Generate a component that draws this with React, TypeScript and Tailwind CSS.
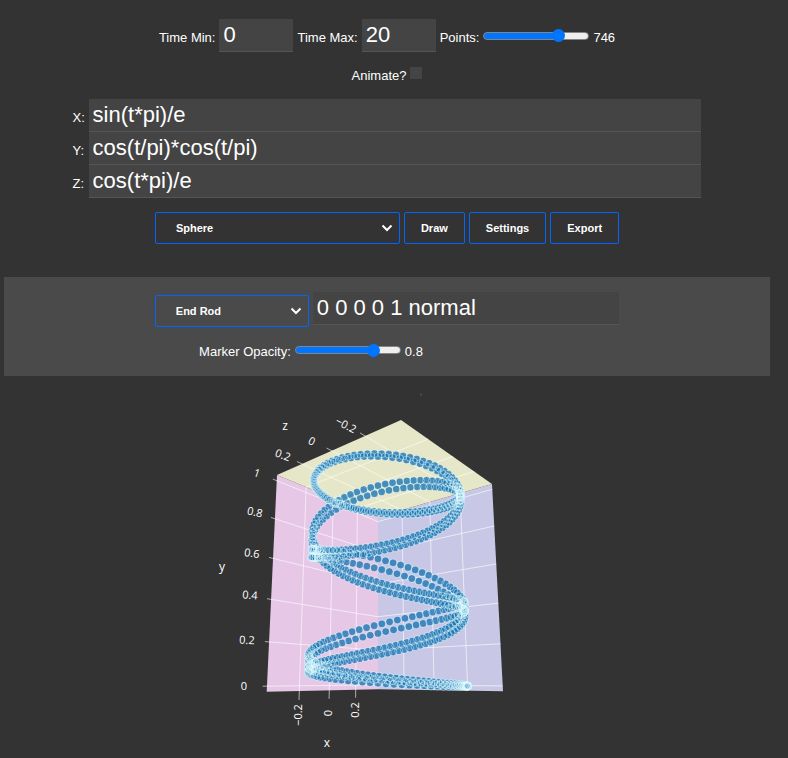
import { useState } from "react";
import type { ReactNode } from "react";

const field =
  "h-[33px] border-b border-[#555555] bg-[#444444] px-1 pb-px text-[22px] text-white outline-none";
const action =
  "h-8 rounded-[2px] border border-[#0066ff] text-[11px] font-bold text-white";
const range =
  "h-2 w-[106px] appearance-none rounded-full border border-[#858585] outline-none [&::-webkit-slider-thumb]:size-[13px] [&::-webkit-slider-thumb]:appearance-none [&::-webkit-slider-thumb]:rounded-full [&::-webkit-slider-thumb]:bg-[#0075ff]";

function Picker({ id, label, width, options }: { id: string; label: string; width: string; options: string[] }) {
  return (
    <div className={"relative h-8 " + width}>
      <select id={id} aria-label={label} className={action + " w-full appearance-none bg-transparent pl-5 pr-8 outline-none"}>
        {options.map((o) => (
          <option key={o} className="bg-[#333333]">{o}</option>
        ))}
      </select>
      <svg className="pointer-events-none absolute right-[7px] top-[11px]" width="12" height="10" viewBox="0 0 12 10" fill="none" stroke="#fff" strokeWidth="2">
        <path d="M1.500 2.500 6 7l4.500-4.500" />
      </svg>
    </div>
  );
}

function Slider({ id, label, min, max, step, initial }: { id: string; label: string; min: number; max: number; step: number; initial: number }) {
  const [value, setValue] = useState(initial);
  const pct = ((value - min) / (max - min)) * 100;
  return (
    <>
      <label htmlFor={id}>{label}</label>
      <input
        id={id}
        type="range"
        min={min}
        max={max}
        step={step}
        value={value}
        onChange={(e) => setValue(Number(e.target.value))}
        className={range}
        style={{ background: `linear-gradient(to right, #0075ff ${pct}%, #efefef ${pct}%)` }}
      />
      <output htmlFor={id}>{value}</output>
    </>
  );
}

// Homogeneous projection of the axis box; each factor runs from 0 at the far top corner to 1.
const HALF = 0.39;
const Y_TOP = 1.03;
const Y_SPAN = 1.055;

function project(a: number, b: number, d: number): [number, number, number] {
  const w = 1 - 0.2042 * a - 0.1683 * b - 0.073 * d;
  return [
    (378 - 157.6 * a + 31.2 * b - 27.6 * d) / w,
    (517 - 139 * a - 114.5 * b + 122 * d) / w,
    w,
  ];
}
const side = (v: number) => (HALF - v) / (2 * HALF);
const height = (y: number) => (Y_TOP - y) / Y_SPAN;

type Corner = [number, number, number];
const poly = (corners: Corner[]) => corners.map((c) => project(...c).slice(0, 2).map((n) => n.toFixed(1)).join(",")).join(" ");

const faces: { color: string; corners: Corner[] }[] = [
  { color: "#e6c8e6", corners: [[0, 0, 0], [1, 0, 0], [1, 0, 1], [0, 0, 1]] },
  { color: "#c8c8e6", corners: [[0, 0, 0], [0, 1, 0], [0, 1, 1], [0, 0, 1]] },
  { color: "#e6e6c8", corners: [[0, 0, 0], [1, 0, 0], [1, 1, 0], [0, 1, 0]] },
];

const grid: Corner[][] = [];
for (const v of [-0.2, 0, 0.2]) {
  const s = side(v);
  grid.push([[s, 0, 0], [s, 0, 1.04]], [[s, 0, 0], [s, 1, 0]]);
  grid.push([[0, s, 0], [0, s, 1]], [[0, s, 0], [1.04, s, 0]]);
}
for (const y of [0, 0.2, 0.4, 0.6, 0.8, 1]) {
  const h = height(y);
  grid.push([[0, 0, h], [1.03, 0, h]], [[0, 0, h], [0, 1, h]]);
}

const POINTS = 746;
const markers = Array.from({ length: POINTS }, (_, i) => {
  const t = (20 * i) / (POINTS - 1);
  const x = Math.sin(t * Math.PI) / Math.E;
  const y = Math.cos(t / Math.PI) ** 2;
  const z = Math.cos(t * Math.PI) / Math.E;
  return project(side(x), side(z), height(y));
}).sort((p, q) => q[2] - p[2]);

const ticks: [string, number, number, number][] = [
  ["−0.2", 346, 425, 27], ["0", 312, 441, 27], ["0.2", 283, 455, 20],
  ["1", 257, 473, 18], ["0.8", 255, 512, 12], ["0.6", 252, 553, 8],
  ["0.4", 250, 595, 5], ["0.2", 247, 640, 3], ["0", 244, 686, 0],
  ["−0.2", 298, 715, -90], ["0", 328, 713, -90], ["0.2", 355, 710, -90],
];
const names: [string, number, number][] = [["z", 285, 426], ["y", 222, 567], ["x", 327, 743]];

function Plot() {
  return (
    <svg className="mx-auto mt-[10px] block" width="360" height="372" viewBox="207 386 360 372" role="img" aria-label="3D curve">
      {faces.map((f) => <polygon key={f.color} points={poly(f.corners)} fill={f.color} />)}
      {grid.map((line, i) => <polyline key={i} points={poly(line)} fill="none" stroke="#fff" strokeOpacity="0.6" />)}
      <rect x="420" y="393" width="2" height="3" fill="#444444" />
      <g fill="#1f77b4" fillOpacity="0.8">
        {markers.map(([x, y], i) => <circle key={i} cx={x.toFixed(2)} cy={y.toFixed(2)} r="3.6" />)}
      </g>
      <g fill="none" stroke="#e0fcff" strokeWidth="0.6" strokeOpacity="0.75">
        {markers.map(([x, y], i) => <circle key={i} cx={x.toFixed(2)} cy={y.toFixed(2)} r="3.9" />)}
      </g>
      <g fill="#fff" fontFamily="'Open Sans', sans-serif" textAnchor="middle">
        {ticks.map(([text, x, y, angle], i) => (
          <text key={i} x={x} y={y + 4} fontSize="11" transform={`rotate(${angle} ${x} ${y})`}>{text}</text>
        ))}
        {names.map(([text, x, y]) => <text key={text} x={x} y={y + 4} fontSize="12">{text}</text>)}
      </g>
    </svg>
  );
}

function Row({ className, children }: { className: string; children: ReactNode }) {
  return <div className={"flex justify-center gap-1 " + className}>{children}</div>;
}

export default function App() {
  return (
    <main className="min-h-screen bg-[#333333] pl-1 pr-[18px] pt-[19px] font-['Liberation_Sans',Arial,sans-serif] text-[13px] leading-4 text-white">
      <Row className="items-center">
        <label htmlFor="tmin" className="pt-1">Time Min:</label>
        <input id="tmin" defaultValue="0" className={field + " w-[74px]"} />
        <label htmlFor="tmax" className="pt-1">Time Max:</label>
        <input id="tmax" defaultValue="20" className={field + " w-[74px]"} />
        <div className="flex items-center gap-1 pt-1 [&>input]:mb-1">
          <Slider id="points" label="Points:" min={1} max={1000} step={1} initial={746} />
        </div>
      </Row>
      <Row className="mt-[15px]">
        <label htmlFor="animate" className="pt-px">Animate?</label>
        <input id="animate" type="checkbox" className="size-3 appearance-none bg-[#444444] checked:bg-[#0075ff]" />
      </Row>
      <div className="mt-[15px]">
        {[["X", "sin(t*pi)/e"], ["Y", "cos(t/pi)*cos(t/pi)"], ["Z", "cos(t*pi)/e"]].map(([axis, value]) => (
          <Row key={axis} className="items-center">
            <label htmlFor={axis} className="w-3 pt-1">{axis}:</label>
            <input id={axis} defaultValue={value} className={field + " w-4/5"} />
          </Row>
        ))}
      </div>
      <Row className="mt-[14px]">
        <Picker id="shape" label="Shape" width="w-[245px]" options={["Sphere", "Circle", "Helix"]} />
        <button className={action + " px-4"}>Draw</button>
        <button className={action + " px-4"}>Settings</button>
        <button className={action + " px-4"}>Export</button>
      </Row>
      <section className="mt-[33px] bg-[#4a4a4a] pb-4 pt-[15px]">
        <Row className="items-end">
          <Picker id="particle" label="Particle" width="w-[154px]" options={["End Rod", "Flame", "Heart"]} />
          <input aria-label="Particle arguments" defaultValue="0 0 0 0 1 normal" className={field + " mb-[2px] w-2/5"} />
        </Row>
        <Row className="mt-[17px] items-center pr-[152px] [&>input]:mb-1">
          <Slider id="opacity" label="Marker Opacity:" min={0.1} max={1} step={0.1} initial={0.8} />
        </Row>
      </section>
      <Plot />
    </main>
  );
}
